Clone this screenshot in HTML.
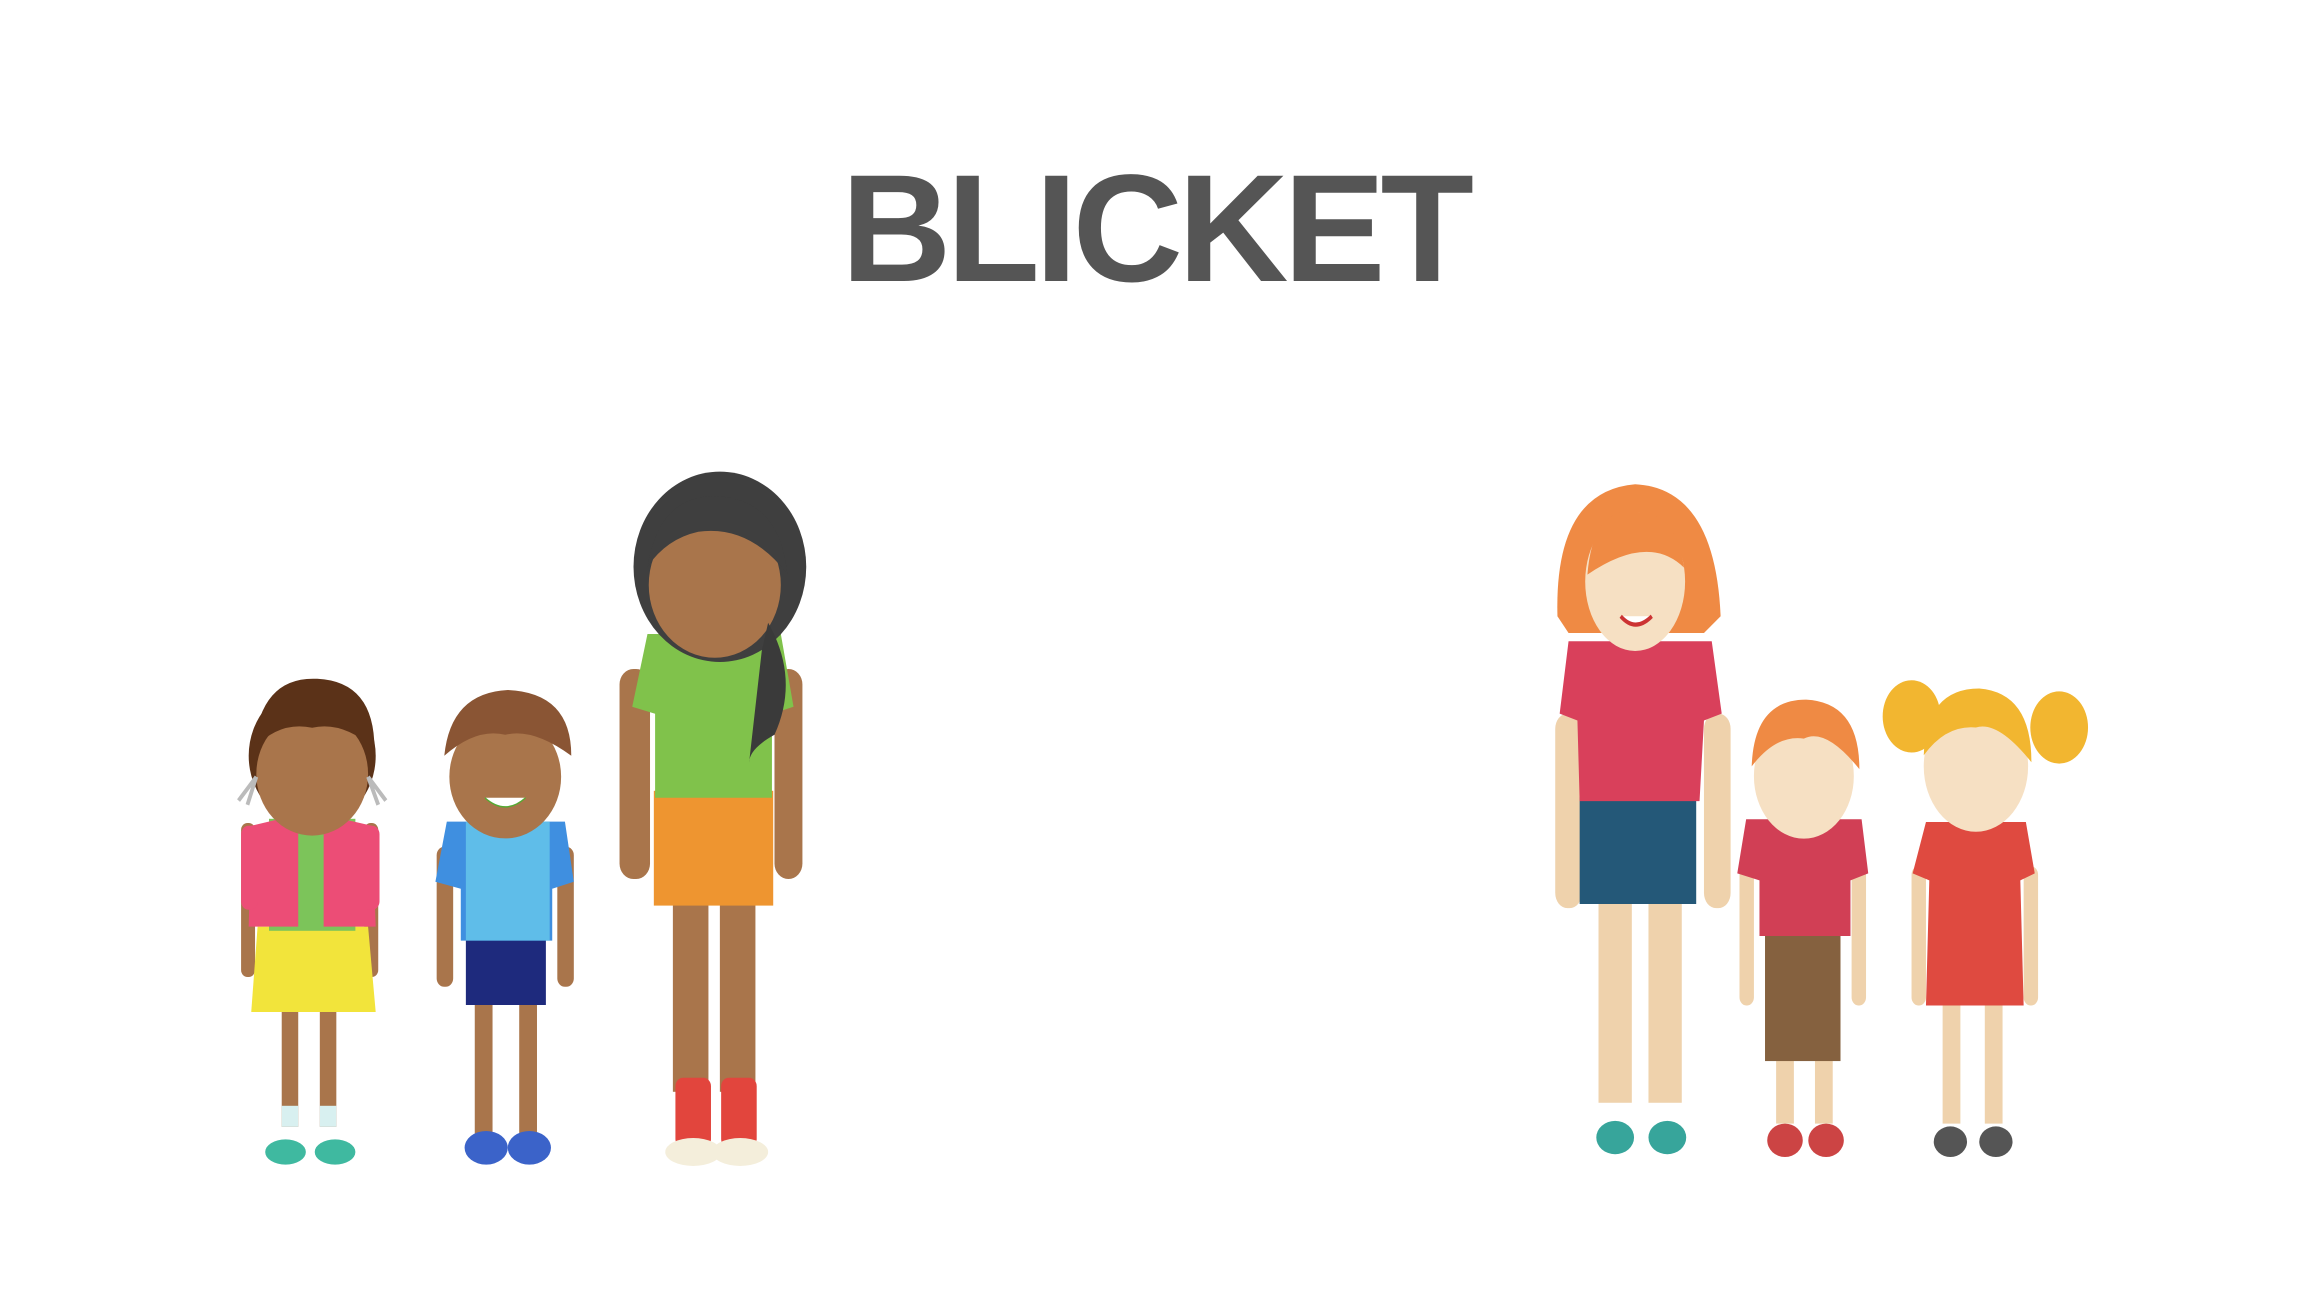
<!DOCTYPE html>
<html><head><meta charset="utf-8"><style>
html,body{margin:0;padding:0;background:#fff;width:2304px;height:1292px;overflow:hidden}
.t{position:absolute;left:-10px;width:2330px;text-align:center;top:152px;font:bold 153px "Liberation Sans",sans-serif;color:#555;letter-spacing:-5px;line-height:1}
svg{position:absolute;left:0;top:0}
</style></head><body>
<div class="t">BLICKET</div>
<svg width="2304" height="1292" viewBox="0 0 2304 1292">
<g transform="translate(236,473) scale(1.27,1.40) translate(-236,-473)">
<g>
 <rect x="240" y="723" width="11" height="110" rx="5" fill="#a9754b"/>
 <rect x="337" y="723" width="11" height="110" rx="5" fill="#a9754b"/>
 <rect x="272" y="855" width="13" height="85" fill="#a9754b"/>
 <rect x="302" y="855" width="13" height="85" fill="#a9754b"/>
 <rect x="272" y="925" width="13" height="15" fill="#d8f0f0"/>
 <rect x="302" y="925" width="13" height="15" fill="#d8f0f0"/>
 <ellipse cx="275" cy="958" rx="16" ry="9" fill="#3fb9a0"/>
 <ellipse cx="314" cy="958" rx="16" ry="9" fill="#3fb9a0"/>
 <path d="M253 797 L340 797 L346 858 L248 858 Z" fill="#f2e43b"/>
 <rect x="262" y="720" width="68" height="80" fill="#7cc45a"/>
 <path d="M248 725 L285 717 L285 797 L246 797 Z M343 725 L305 717 L305 797 L346 797 Z" fill="#ec4d76"/>
 <rect x="240" y="725" width="13" height="60" rx="6" fill="#ec4d76"/>
 <rect x="336" y="725" width="13" height="60" rx="6" fill="#ec4d76"/>
 <circle cx="296" cy="675" r="50" fill="#5b3218"/>
 <ellipse cx="296" cy="688" rx="44" ry="44" fill="#a9754b"/>
 <path d="M250 670 Q255 618 300 620 Q345 622 345 670 Q320 650 296 655 Q270 650 250 670Z" fill="#5b3218"/>
 <path d="M252 690 L238 707 M252 690 L245 710 M340 690 L354 707 M340 690 L348 710" stroke="#bbb" stroke-width="3"/>
</g>
<g>
 <rect x="394" y="740" width="13" height="100" rx="6" fill="#a9754b"/>
 <rect x="489" y="740" width="13" height="100" rx="6" fill="#a9754b"/>
 <rect x="424" y="850" width="14" height="95" fill="#a9754b"/>
 <rect x="459" y="850" width="14" height="95" fill="#a9754b"/>
 <ellipse cx="433" cy="955" rx="17" ry="12" fill="#3b63c9"/>
 <ellipse cx="467" cy="955" rx="17" ry="12" fill="#3b63c9"/>
 <rect x="417" y="805" width="63" height="48" fill="#1e2a7d"/>
 <path d="M402 722 L495 722 L502 765 L485 770 L485 807 L413 807 L413 770 L393 765 Z" fill="#3f8fe0"/>
 <rect x="417" y="722" width="66" height="85" fill="#5fbde9"/>
 <ellipse cx="448" cy="690" rx="44" ry="44" fill="#a9754b"/>
 <path d="M400 675 Q405 630 450 628 Q500 630 500 675 Q470 655 448 660 Q425 655 400 675Z" fill="#8a5534"/>
 <path d="M432 705 Q448 718 464 705" fill="#fff" stroke="#5a3"/>
</g>
<g>
 <rect x="538" y="613" width="24" height="150" rx="11" fill="#a9754b"/>
 <rect x="660" y="613" width="22" height="150" rx="11" fill="#a9754b"/>
 <rect x="580" y="775" width="28" height="140" fill="#a9754b"/>
 <rect x="617" y="775" width="28" height="140" fill="#a9754b"/>
 <rect x="582" y="905" width="28" height="50" rx="6" fill="#e2453d"/>
 <rect x="618" y="905" width="28" height="50" rx="6" fill="#e2453d"/>
 <ellipse cx="596" cy="958" rx="22" ry="10" fill="#f4eedb"/>
 <ellipse cx="633" cy="958" rx="22" ry="10" fill="#f4eedb"/>
 <rect x="565" y="700" width="94" height="82" fill="#ee9530"/>
 <path d="M560 588 L665 588 L675 640 L658 645 L658 705 L566 705 L566 645 L548 640 Z" fill="#80c24b"/>
 <circle cx="617" cy="540" r="68" fill="#3f3f3f"/>
 <ellipse cx="613" cy="553" rx="52" ry="52" fill="#a9754b"/>
 <path d="M560 540 Q570 485 620 490 Q665 495 670 545 Q640 510 600 515 Q575 520 560 540Z" fill="#3f3f3f"/>
 <path d="M655 580 Q680 620 660 660 Q640 670 640 680 Q645 640 650 600Z" fill="#3a3a3a"/>
</g>
</g>
<g transform="translate(1563,487) scale(1.11,1.39) translate(-1563,-487)">
<g>
 <rect x="1556" y="650" width="24" height="140" rx="11" fill="#efd2ac"/>
 <rect x="1690" y="650" width="24" height="140" rx="11" fill="#efd2ac"/>
 <rect x="1595" y="780" width="30" height="150" fill="#efd2ac"/>
 <rect x="1640" y="780" width="30" height="150" fill="#efd2ac"/>
 <ellipse cx="1610" cy="955" rx="17" ry="12" fill="#37a59b"/>
 <ellipse cx="1657" cy="955" rx="17" ry="12" fill="#37a59b"/>
 <rect x="1578" y="710" width="105" height="77" fill="#245878"/>
 <path d="M1568 598 L1697 598 L1706 650 L1690 655 L1686 713 L1578 713 L1576 655 L1560 650 Z" fill="#d9405b"/>
 <path d="M1558 580 Q1555 490 1628 485 Q1700 488 1705 580 L1690 592 L1568 592Z" fill="#ef8a44"/>
 <ellipse cx="1628" cy="555" rx="45" ry="50" fill="#f6e0c3"/>
 <path d="M1585 550 Q1590 500 1630 505 Q1665 505 1672 545 Q1640 520 1585 550Z" fill="#ef8a44"/>
 <path d="M1615 580 Q1628 592 1643 580" fill="#fff" stroke="#c33" stroke-width="3"/>
</g>
<g>
 <rect x="1722" y="760" width="13" height="100" rx="6" fill="#efd2ac"/>
 <rect x="1823" y="760" width="13" height="100" rx="6" fill="#efd2ac"/>
 <rect x="1755" y="895" width="16" height="50" fill="#efd2ac"/>
 <rect x="1790" y="895" width="16" height="50" fill="#efd2ac"/>
 <ellipse cx="1763" cy="957" rx="16" ry="12" fill="#c44"/>
 <ellipse cx="1800" cy="957" rx="16" ry="12" fill="#c44"/>
 <rect x="1745" y="808" width="68" height="92" fill="#85613f"/>
 <path d="M1728 726 L1832 726 L1838 765 L1822 770 L1822 810 L1740 810 L1740 770 L1720 765 Z" fill="#d13f55"/>
 <ellipse cx="1780" cy="695" rx="45" ry="45" fill="#f6e0c3"/>
 <path d="M1733 688 Q1735 640 1782 640 Q1830 642 1830 690 Q1800 660 1780 668 Q1755 665 1733 688Z" fill="#ef8a44"/>
</g>
<g>
 <rect x="1877" y="760" width="13" height="100" rx="6" fill="#efd2ac"/>
 <rect x="1978" y="760" width="13" height="100" rx="6" fill="#efd2ac"/>
 <rect x="1905" y="855" width="16" height="90" fill="#efd2ac"/>
 <rect x="1943" y="855" width="16" height="90" fill="#efd2ac"/>
 <ellipse cx="1912" cy="958" rx="15" ry="11" fill="#555"/>
 <ellipse cx="1953" cy="958" rx="15" ry="11" fill="#555"/>
 <path d="M1890 728 L1980 728 L1988 765 L1975 770 L1978 860 L1890 860 L1893 770 L1878 765 Z" fill="#df4a40"/>
 <circle cx="1877" cy="652" r="26" fill="#f2b630"/>
 <circle cx="2010" cy="660" r="26" fill="#f2b630"/>
 <ellipse cx="1935" cy="688" rx="47" ry="47" fill="#f6e0c3"/>
 <path d="M1888 680 Q1890 632 1938 632 Q1985 635 1985 685 Q1955 655 1935 660 Q1908 658 1888 680Z" fill="#f2b630"/>
</g>
</g>
</svg>
</body></html>
